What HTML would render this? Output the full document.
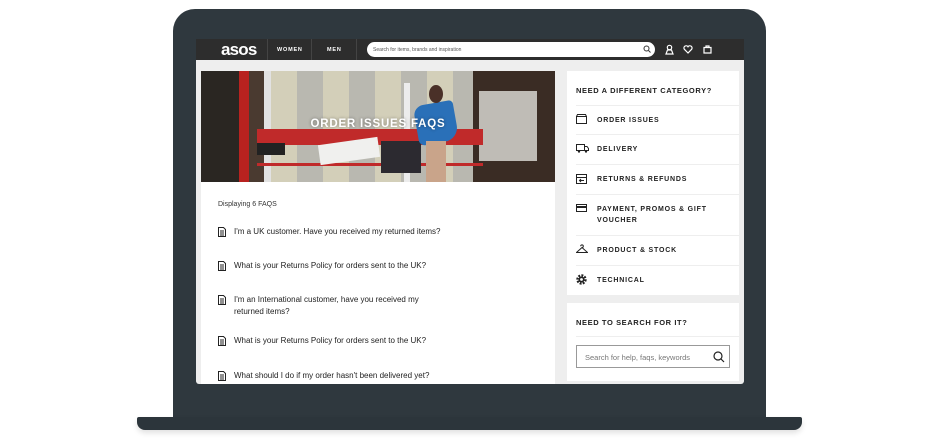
<!DOCTYPE html>
<html><head><meta charset="utf-8"><style>
*{margin:0;padding:0;box-sizing:border-box}
body{width:940px;height:440px;background:#fff;position:relative;overflow:hidden;font-family:"Liberation Sans",sans-serif}
.abs{position:absolute}
.body{left:173px;top:9px;width:593px;height:412px;background:#2f383e;border-radius:22px 22px 0 0}
.base{left:137px;top:417px;width:665px;height:13px;background:#2c353b;border-radius:2px 2px 8px 8px;box-shadow:0 3px 6px rgba(0,0,0,.12)}
.screen{left:196px;top:39px;width:548px;height:345px;background:#eee;overflow:hidden;border-radius:0 0 3px 3px}
.nav{left:0;top:0;width:548px;height:21px;background:#2d2d2d}
.nav .sep{position:absolute;top:0;width:1px;height:21px;background:#444}
.logo{left:25px;top:1px;color:#fff;font-size:17px;font-weight:bold;letter-spacing:-.8px}
.navt{top:8px;color:#fff;font-size:5.5px;font-weight:bold;letter-spacing:.8px}
.srch{left:171px;top:3px;width:288px;height:15px;background:#fff;border-radius:8px;font-size:5px;color:#555;padding:5px 0 0 6px}
.ico{stroke:#fff;fill:none;stroke-width:1.2}
.left{left:5px;top:32px;width:354px;height:320px;background:#fff}
.hero{left:0;top:0;width:354px;height:111px;overflow:hidden;background:#c9c3ad}
.faq{position:absolute;left:33px;font-size:8px;color:#222;line-height:12px}
.faq svg{position:absolute;left:-16px;top:1px}
.right{left:371px;top:32px;width:172px;height:224px;background:#fff}
.r2{left:371px;top:264px;width:172px;height:78px;background:#fff}
.h{position:absolute;left:9px;font-size:7.5px;font-weight:bold;letter-spacing:.6px;color:#222}
.row{position:absolute;left:9px;width:163px;border-top:1.5px solid #eee}
.row span{position:absolute;left:21px;font-size:7px;font-weight:bold;letter-spacing:.8px;color:#222;line-height:11px}
.row svg{position:absolute;left:0}
</style></head><body>
<div class="abs body"></div>
<div class="abs base"></div>
<div class="abs screen">
 <div class="abs nav">
  <div class="abs logo">asos</div>
  <div class="sep" style="left:71px"></div>
  <div class="abs navt" style="left:81px">WOMEN</div>
  <div class="sep" style="left:115px"></div>
  <div class="abs navt" style="left:131px">MEN</div>
  <div class="sep" style="left:160px"></div>
  <div class="abs srch">Search for items, brands and inspiration</div>
  <svg class="abs" style="left:447px;top:6px" width="8" height="8"><circle cx="3.5" cy="3.5" r="2.5" stroke="#333" fill="none"/><path d="M5.5 5.5L7.5 7.5" stroke="#333"/></svg>
  <svg class="abs ico" style="left:469px;top:5px" width="9" height="11"><circle cx="4.5" cy="3.5" r="2.2"/><path d="M1 10h7l-1.5-4h-4z"/></svg>
  <svg class="abs ico" style="left:487px;top:6px" width="10" height="9"><path d="M5 8L1.3 4.2A2 2 0 0 1 5 1.8 2 2 0 0 1 8.7 4.2z"/></svg>
  <svg class="abs ico" style="left:507px;top:5px" width="9" height="10"><path d="M1 3.5h7v5.5H1zM3 3.5V2h3v1.5"/></svg>
 </div>
 <div class="abs left">
  <div class="abs hero">
   <div class="abs" style="left:0;top:0;width:40px;height:111px;background:#2a2622"></div>
   <div class="abs" style="left:40px;top:0;width:24px;height:111px;background:#4a3a30"></div>
   <div class="abs" style="left:38px;top:0;width:10px;height:111px;background:#b8221f"></div>
   <div class="abs" style="left:63px;top:0;width:7px;height:111px;background:#e2e2e2"></div>
   <div class="abs" style="left:70px;top:0;width:202px;height:111px;background:repeating-linear-gradient(90deg,#d3cfb9 0 26px,#b9b8b0 26px 52px)"></div>
   <div class="abs" style="left:272px;top:0;width:82px;height:111px;background:#3a2c24"></div>
   <div class="abs" style="left:278px;top:20px;width:58px;height:70px;background:#bfbcb6"></div>
   <div class="abs" style="left:203px;top:12px;width:6px;height:99px;background:#ececec"></div>
   <div class="abs" style="left:56px;top:58px;width:226px;height:16px;background:#c02a2a"></div>
   <div class="abs" style="left:56px;top:92px;width:226px;height:3px;background:#c02a2a"></div>
   <div class="abs" style="left:118px;top:70px;width:60px;height:20px;background:#f0f0ee;transform:rotate(-8deg)"></div>
   <div class="abs" style="left:56px;top:72px;width:28px;height:12px;background:#222"></div>
   <div class="abs" style="left:180px;top:70px;width:40px;height:32px;background:#2c2a30"></div>
   <div class="abs" style="left:215px;top:32px;width:40px;height:40px;background:#2a70b8;border-radius:10px 4px 14px 6px;transform:rotate(-10deg)"></div>
   <div class="abs" style="left:228px;top:14px;width:14px;height:18px;background:#4a3028;border-radius:50%"></div>
   <div class="abs" style="left:225px;top:70px;width:20px;height:41px;background:#c9a48a"></div>
   <div class="abs" style="left:0;top:47px;width:354px;text-align:center;color:#fff;font-size:11.5px;font-weight:bold;letter-spacing:.8px;text-shadow:0 0 3px rgba(0,0,0,.4)">ORDER ISSUES FAQS</div>
  </div>
  <div class="faq" style="left:17px;top:128px;font-size:7px;color:#333">Displaying 6 FAQS</div>
  <div class="faq" style="top:155px"><svg width="8" height="10"><path d="M.5.5h5l2 2v7h-7z M2 4h4M2 6h4M2 8h4" stroke="#222" fill="none"/></svg>I'm a UK customer. Have you received my returned items?</div>
  <div class="faq" style="top:189px"><svg width="8" height="10"><path d="M.5.5h5l2 2v7h-7z M2 4h4M2 6h4M2 8h4" stroke="#222" fill="none"/></svg>What is your Returns Policy for orders sent to the UK?</div>
  <div class="faq" style="top:223px"><svg width="8" height="10"><path d="M.5.5h5l2 2v7h-7z M2 4h4M2 6h4M2 8h4" stroke="#222" fill="none"/></svg>I'm an International customer, have you received my<br>returned items?</div>
  <div class="faq" style="top:264px"><svg width="8" height="10"><path d="M.5.5h5l2 2v7h-7z M2 4h4M2 6h4M2 8h4" stroke="#222" fill="none"/></svg>What is your Returns Policy for orders sent to the UK?</div>
  <div class="faq" style="top:299px"><svg width="8" height="10"><path d="M.5.5h5l2 2v7h-7z M2 4h4M2 6h4M2 8h4" stroke="#222" fill="none"/></svg>What should I do if my order hasn't been delivered yet?</div>
 </div>
 <div class="abs right">
  <div class="h" style="top:15px">NEED A DIFFERENT CATEGORY?</div>
  <div class="row" style="top:34px;height:30px"><svg style="top:8px" width="11" height="10"><path d="M.5 2.5h10v7H.5zM.5 2.5l1-2h8l1 2" stroke="#222" fill="none"/></svg><span style="top:9px">ORDER ISSUES</span></div>
  <div class="row" style="top:63px;height:30px"><svg style="top:9px" width="13" height="9"><path d="M.5.5h8v6H.5zM8.5 2.5h2.5l1.5 2v2h-4" stroke="#222" fill="none"/><circle cx="3" cy="7.5" r="1.2" fill="#222"/><circle cx="10" cy="7.5" r="1.2" fill="#222"/></svg><span style="top:9px">DELIVERY</span></div>
  <div class="row" style="top:93px;height:30px"><svg style="top:8px" width="11" height="11"><path d="M.5 1.5h10v9H.5zM.5 4.5h10M8 7.5H3.5M5 6l-1.5 1.5L5 9" stroke="#222" fill="none"/></svg><span style="top:9px">RETURNS &amp; REFUNDS</span></div>
  <div class="row" style="top:123px;height:41px"><svg style="top:9px" width="11" height="9"><path d="M.5.5h10v7H.5z" stroke="#222" fill="none"/><path d="M.5 2h10v2H.5z" fill="#222"/></svg><span style="top:9px">PAYMENT, PROMOS &amp; GIFT<br>VOUCHER</span></div>
  <div class="row" style="top:164px;height:30px"><svg style="top:8px" width="12" height="10"><path d="M6 3.5a1.3 1.3 0 1 0-1.3-1.3M6 3.5L.5 8.5h11z" stroke="#222" fill="none"/></svg><span style="top:9px">PRODUCT &amp; STOCK</span></div>
  <div class="row" style="top:194px;height:30px"><svg style="top:8px" width="11" height="11"><circle cx="5.5" cy="5.5" r="4" stroke="#222" stroke-width="2.4" stroke-dasharray="1.9 1.2" fill="none"/><circle cx="5.5" cy="5.5" r="3" fill="#222"/><circle cx="5.5" cy="5.5" r="1.4" fill="#fff"/></svg><span style="top:9px">TECHNICAL</span></div>
 </div>
 <div class="abs r2">
  <div class="h" style="top:15px">NEED TO SEARCH FOR IT?</div>
  <div class="row" style="top:33px;height:1px"></div>
  <div class="abs" style="left:9px;top:42px;width:154px;height:23px;border:1px solid #999;font-size:7.5px;color:#777;padding:7px 0 0 8px">Search for help, faqs, keywords
   <svg class="abs" style="left:136px;top:5px" width="12" height="12"><circle cx="5" cy="5" r="4" stroke="#222" stroke-width="1.2" fill="none"/><path d="M8 8l3 3" stroke="#222" stroke-width="1.2"/></svg></div>
 </div>
</div>
</body></html>
